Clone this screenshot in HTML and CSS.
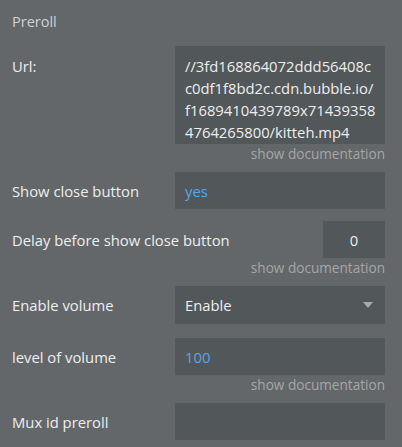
FILE: index.html
```html
<!DOCTYPE html>
<html>
<head>
<meta charset="utf-8">
<link rel="stylesheet" href="styles.css">
</head>
<body>
<div class="panel">
  <div class="section-title">Preroll</div>

  <div class="field">
    <div class="row row-top">
      <div class="label label-top">Url:</div>
      <div class="box box-area">
        <div>//3fd168864072ddd56408c</div>
        <div>c0df1f8bd2c.cdn.bubble.io/</div>
        <div>f1689410439789x71439358</div>
        <div>4764265800/kitteh.mp4</div>
      </div>
    </div>
    <div class="doc">show documentation</div>
  </div>

  <div class="field">
    <div class="row">
      <div class="label">Show close button</div>
      <div class="box value-blue">yes</div>
    </div>
  </div>

  <div class="field">
    <div class="row">
      <div class="label">Delay before show close button</div>
      <div class="box box-small">0</div>
    </div>
    <div class="doc">show documentation</div>
  </div>

  <div class="field field-wide">
    <div class="row">
      <div class="label">Enable volume</div>
      <div class="box box-select">
        <span>Enable</span>
        <span class="caret"></span>
      </div>
    </div>
  </div>

  <div class="field">
    <div class="row">
      <div class="label">level of volume</div>
      <div class="box value-blue">100</div>
    </div>
    <div class="doc">show documentation</div>
  </div>

  <div class="field">
    <div class="row">
      <div class="label">Mux id preroll</div>
      <div class="box"></div>
    </div>
  </div>
</div>
</body>
</html>
```

FILE: styles.css
```css
html, body {
  margin: 0;
  padding: 0;
  background: #63676a;
}

.panel {
  width: 402px;
  height: 447px;
  box-sizing: border-box;
  padding: 12px 17px 0 12px;
  font-family: "Open Sans", "Noto Sans", sans-serif;
  font-size: 14.8px;
  color: #eeeeee;
  overflow: hidden;
}

.section-title {
  color: #cfd1d3;
  font-size: 14.5px;
  line-height: 20px;
  height: 20px;
  margin-bottom: 14px;
}

.field {
  margin-bottom: 12px;
}

.field-wide {
  margin-bottom: 14px;
}

.row {
  display: flex;
  align-items: center;
  justify-content: space-between;
}

.row-top {
  align-items: flex-start;
}

.label {
  flex: 1;
  line-height: 20px;
  white-space: nowrap;
}

.label-top {
  padding-top: 10px;
}

.box {
  width: 210px;
  height: 37px;
  flex: none;
  box-sizing: border-box;
  background: #52575a;
  padding: 0 10px;
  display: flex;
  align-items: center;
  line-height: 20px;
}

.box-area {
  display: block;
  height: 98px;
  padding: 9px 10px 0 10px;
  line-height: 22px;
  white-space: nowrap;
  overflow: hidden;
}

.box-small {
  width: 62px;
  justify-content: center;
  padding: 0;
}

.value-blue {
  color: #5ca3ec;
}

.box-select {
  height: 38px;
  justify-content: space-between;
  padding-right: 12px;
}

.caret {
  width: 0;
  height: 0;
  border-left: 5.5px solid transparent;
  border-right: 5.5px solid transparent;
  border-top: 6px solid #a7abae;
}

.doc {
  text-align: right;
  font-size: 13.6px;
  color: #a3a6a8;
  line-height: 16px;
  margin: 2px 0 -2px 0;
}
```
